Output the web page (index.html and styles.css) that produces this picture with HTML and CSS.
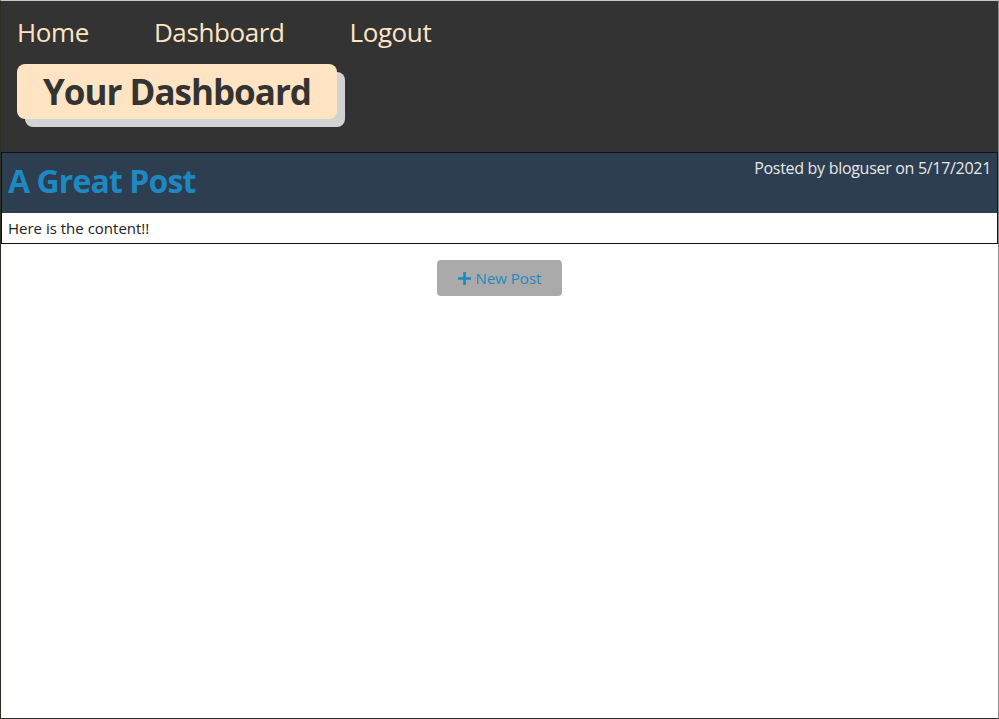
FILE: index.html
```html
<!DOCTYPE html>
<html lang="en">
<head>
<meta charset="utf-8">
<title>Your Dashboard</title>
<link rel="stylesheet" href="styles.css">
</head>
<body>
<div class="page">
  <header class="site-header">
    <nav class="nav">
      <a href="#" class="nav-link">Home</a>
      <a href="#" class="nav-link">Dashboard</a>
      <a href="#" class="nav-link">Logout</a>
    </nav>
    <h1 class="page-title">Your Dashboard</h1>
  </header>
  <main class="main">
    <article class="post">
      <div class="post-head">
        <h2 class="post-title">A Great Post</h2>
        <span class="post-meta">Posted by bloguser on 5/17/2021</span>
      </div>
      <div class="post-body">Here is the content!!</div>
    </article>
    <div class="actions">
      <button class="new-post" type="button">
        <svg class="plus" viewBox="0 0 14 14" width="14" height="14" aria-hidden="true"><path d="M5.6 0h2.8v5.6H14v2.8H8.4V14H5.6V8.4H0V5.6h5.6z" fill="currentColor"/></svg>
        New Post
      </button>
    </div>
  </main>
</div>
</body>
</html>
```
FILE: styles.css
```css
html, body {
  margin: 0;
  padding: 0;
  background: #ffffff;
}
body {
  font-family: "Open Sans", "Noto Sans", "Liberation Sans", sans-serif;
  color: #222;
}
.page {
  box-sizing: border-box;
  min-height: 100vh;
  border-top: 1px solid #c8c8c8;
  border-left: 1px solid #2b2e22;
  border-right: 1px solid #8a8a8a;
  border-bottom: 1px solid #2b2e22;
  display: flex;
  flex-direction: column;
}
.site-header {
  background: #333333;
  height: 151px;
  box-sizing: border-box;
  padding: 13px 16px 0;
}
.nav {
  display: flex;
  gap: 65px;
}
.nav-link {
  color: #ffe4c4;
  text-decoration: none;
  font-size: 26px;
  line-height: 37px;
  letter-spacing: -0.4px;
}
.page-title {
  display: inline-block;
  margin: 13px 0 0;
  background: #ffe4c4;
  color: #333333;
  font-size: 35px;
  font-weight: 700;
  letter-spacing: -1px;
  line-height: 55px;
  padding: 0 26px 0 26px;
  border-radius: 8px;
  box-shadow: 8px 8px 0 #d3d3d3;
}
.main {
  flex: 1;
}
.post {
  border: 1px solid #111111;
}
.post-head {
  background: #2c3e50;
  height: 60px;
  display: flex;
  justify-content: space-between;
  align-items: flex-start;
  padding: 0 6px 0 6px;
}
.post-title {
  margin: 0;
  padding-top: 8px;
  color: #1e88c2;
  font-size: 32px;
  font-weight: 700;
  letter-spacing: -0.9px;
  line-height: 40px;
}
.post-meta {
  color: #e8e8e8;
  font-size: 16px;
  letter-spacing: -0.3px;
  line-height: 22px;
  padding-top: 4px;
}
.post-body {
  padding: 5px 6px;
  font-size: 15px;
  line-height: 20px;
  color: #222;
}
.actions {
  display: flex;
  justify-content: center;
  padding-top: 16px;
}
.new-post {
  display: inline-flex;
  align-items: center;
  gap: 5px;
  width: 125px;
  height: 36px;
  justify-content: center;
  background: #aaaaaa;
  color: #1e88c2;
  border: none;
  border-radius: 4px;
  font-family: inherit;
  font-size: 15px;
}
.plus {
  width: 13px;
  height: 13px;
}
```
